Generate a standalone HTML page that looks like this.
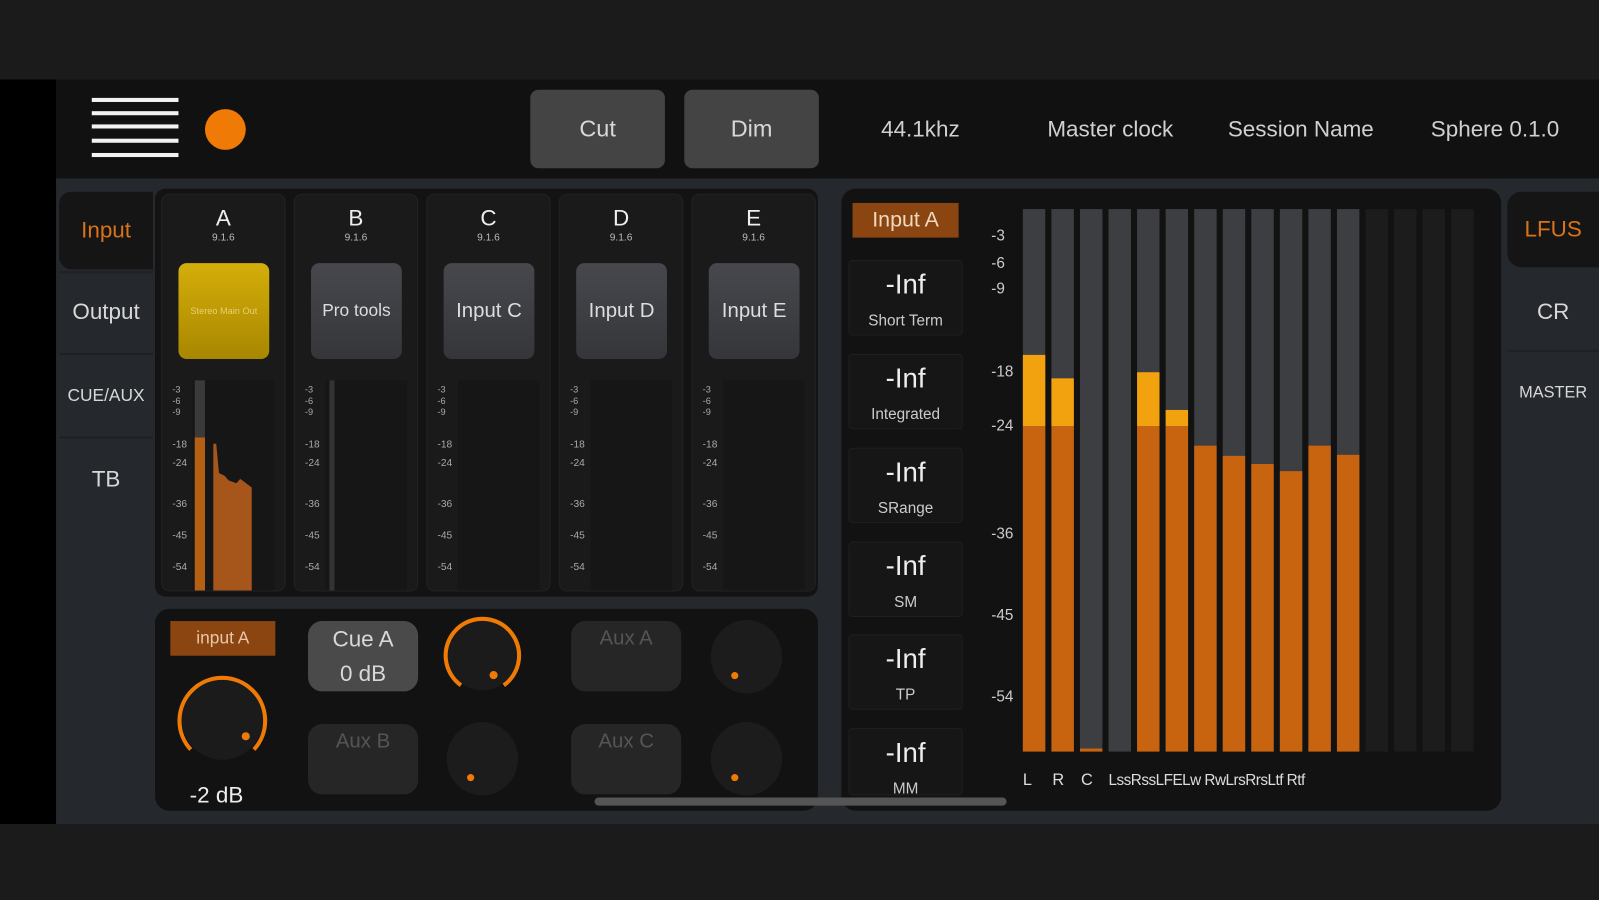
<!DOCTYPE html>
<html><head><meta charset="utf-8"><style>
*{margin:0;padding:0;box-sizing:border-box}
body{width:1599px;height:900px;background:#1b1b1b;position:relative;overflow:hidden;font-family:"Liberation Sans",sans-serif;color:#d8d8d8}
#w{position:absolute;left:0;top:0;width:1568px;height:883px;transform:scale(1.0198);transform-origin:0 0}
.a{position:absolute}
.c{display:flex;align-items:center;justify-content:center;text-align:center}
.ham{left:90px;width:85px;height:4px;background:#f2f2f2}
.tab{left:58px;width:92px;font-size:22px}
.rtab{left:1478px;width:90px;font-size:22px}
.ch{width:122px;top:190px;height:390px;background:#1a1a1a;border-radius:8px;border:1px solid #222}
.ltr{font-size:22px;width:100%;top:10px;text-align:center;color:#eee}
.ver{font-size:10px;width:100%;top:37px;text-align:center;color:#bbb}
.btn{left:16px;top:67px;width:89px;height:94px;border-radius:8px;background:linear-gradient(#47484d,#35363a);font-size:20px;color:#ddd}
.sc{font-size:10px;color:#aaa;left:10px}
.mtr{left:30px;top:182px;width:80px;height:206px;background:#161616}
.stat{left:832px;width:112px;height:74px;background:#161616;border-radius:4px;border:1px solid #1f1f1f}
.stat b{position:absolute;top:8px;width:100%;text-align:center;font-size:27px;font-weight:normal;color:#eee}
.stat i{position:absolute;top:50px;width:100%;text-align:center;font-size:15px;font-style:normal;color:#ccc}
.bar{top:205px;width:22px;height:532px;background:#3d3e42}
.dbar{top:205px;width:22px;height:532px;background:#1c1c1c}
.or{position:absolute;left:0;bottom:0;width:100%;background:#c8630f}
.ye{position:absolute;left:0;width:100%;background:#f2a20f}
.ms{left:972px;font-size:15px;color:#ccc}
.cl{top:757px;font-size:16px;color:#ddd}
.hdr{top:114px;font-size:22px;color:#d0d0d0}
</style></head><body><div id="w">
<div class="a" style="left:0;top:78px;width:55px;height:730px;background:#000"></div>
<div class="a" style="left:55px;top:78px;width:1513px;height:730px;background:#25282c"></div>
<div class="a" style="left:55px;top:78px;width:1513px;height:97px;background:#111"></div>
<div class="a ham" style="top:96px"></div><div class="a ham" style="top:109px"></div><div class="a ham" style="top:122px"></div><div class="a ham" style="top:136px"></div><div class="a ham" style="top:150px"></div>
<div class="a" style="left:201px;top:107px;width:40px;height:40px;border-radius:50%;background:#f07a06"></div>
<div class="a c" style="left:520px;top:88px;width:132px;height:77px;background:#444;border-radius:8px;font-size:23px">Cut</div>
<div class="a c" style="left:671px;top:88px;width:132px;height:77px;background:#444;border-radius:8px;font-size:23px">Dim</div>
<div class="a hdr" style="left:864px">44.1khz</div>
<div class="a hdr" style="left:1027px">Master clock</div>
<div class="a hdr" style="left:1204px">Session Name</div>
<div class="a hdr" style="left:1403px">Sphere 0.1.0</div>

<div class="a c tab" style="top:188px;height:76px;background:#151515;border-radius:12px 0 0 12px;color:#d9731a">Input</div>
<div class="a c tab" style="top:268px;height:76px">Output</div>
<div class="a c tab" style="top:348px;height:80px;font-size:17px">CUE/AUX</div>
<div class="a c tab" style="top:430px;height:80px">TB</div>
<div class="a" style="left:58px;top:266px;width:92px;height:2px;background:#1e2124"></div>
<div class="a" style="left:58px;top:346px;width:92px;height:2px;background:#1e2124"></div>
<div class="a" style="left:58px;top:428px;width:92px;height:2px;background:#1e2124"></div>

<div class="a" style="left:152px;top:185px;width:650px;height:400px;background:#131313;border-radius:10px"></div>

<div class="a ch" style="left:158px"><div class="a ltr">A</div><div class="a ver">9.1.6</div>
<div class="a c btn" style="background:linear-gradient(#d4ae0a,#a88700);font-size:9px;color:#e8d070">Stereo Main Out</div>
<div class="a mtr"><div class="a" style="left:2px;top:0;width:10px;height:206px;background:#3a3a3a"></div><div class="a" style="left:2px;top:56px;width:10px;height:150px;background:#b55f13"></div><div class="a" style="left:20px;top:62px;width:38px;height:144px;background:#a6561a;clip-path:polygon(0 0,8% 0,15% 20%,30% 22%,40% 25%,60% 27%,70% 24%,100% 30%,100% 100%,0 100%)"></div></div>
<div class="a sc" style="top:240px">-18</div><div class="a sc" style="top:258px">-24</div><div class="a sc" style="top:298px">-36</div><div class="a sc" style="top:329px">-45</div><div class="a sc" style="top:360px">-54</div>
<div class="a sc" style="top:186px;font-size:9px;line-height:11px">-3<br>-6<br>-9</div></div>

<div class="a ch" style="left:288px"><div class="a ltr">B</div><div class="a ver">9.1.6</div><div class="a c btn" style="font-size:17px">Pro tools</div>
<div class="a mtr"><div class="a" style="left:4px;top:0;width:5px;height:206px;background:#333"></div></div>
<div class="a sc" style="top:240px">-18</div><div class="a sc" style="top:258px">-24</div><div class="a sc" style="top:298px">-36</div><div class="a sc" style="top:329px">-45</div><div class="a sc" style="top:360px">-54</div><div class="a sc" style="top:186px;font-size:9px;line-height:11px">-3<br>-6<br>-9</div></div>

<div class="a ch" style="left:418px"><div class="a ltr">C</div><div class="a ver">9.1.6</div><div class="a c btn">Input C</div><div class="a mtr"></div>
<div class="a sc" style="top:240px">-18</div><div class="a sc" style="top:258px">-24</div><div class="a sc" style="top:298px">-36</div><div class="a sc" style="top:329px">-45</div><div class="a sc" style="top:360px">-54</div><div class="a sc" style="top:186px;font-size:9px;line-height:11px">-3<br>-6<br>-9</div></div>

<div class="a ch" style="left:548px"><div class="a ltr">D</div><div class="a ver">9.1.6</div><div class="a c btn">Input D</div><div class="a mtr"></div>
<div class="a sc" style="top:240px">-18</div><div class="a sc" style="top:258px">-24</div><div class="a sc" style="top:298px">-36</div><div class="a sc" style="top:329px">-45</div><div class="a sc" style="top:360px">-54</div><div class="a sc" style="top:186px;font-size:9px;line-height:11px">-3<br>-6<br>-9</div></div>

<div class="a ch" style="left:678px"><div class="a ltr">E</div><div class="a ver">9.1.6</div><div class="a c btn">Input E</div><div class="a mtr"></div>
<div class="a sc" style="top:240px">-18</div><div class="a sc" style="top:258px">-24</div><div class="a sc" style="top:298px">-36</div><div class="a sc" style="top:329px">-45</div><div class="a sc" style="top:360px">-54</div><div class="a sc" style="top:186px;font-size:9px;line-height:11px">-3<br>-6<br>-9</div></div>

<div class="a" style="left:152px;top:597px;width:650px;height:198px;background:#121212;border-radius:14px"></div>
<div class="a c" style="left:167px;top:609px;width:103px;height:34px;background:#8a4510;font-size:17px;color:#e8c8a8">input A</div>
<svg class="a" style="left:160px;top:650px" width="116" height="110"><circle cx="58" cy="55" r="40" fill="#1b1b1b"/><path d="M27 85 A42 42 0 1 1 89 85" fill="none" stroke="#f07a06" stroke-width="4"/><circle cx="81" cy="72" r="4" fill="#f07a06"/></svg>
<div class="a" style="left:186px;top:767px;font-size:22px;color:#eee">-2 dB</div>
<div class="a c" style="left:302px;top:609px;width:108px;height:69px;background:#4a4a4a;border-radius:14px;font-size:22px;line-height:34px">Cue A<br>0 dB</div>
<svg class="a" style="left:433px;top:603px" width="80" height="80"><circle cx="40" cy="40" r="34" fill="#1b1b1b"/><path d="M19 69 A36 36 0 1 1 61 69" fill="none" stroke="#f07a06" stroke-width="4"/><circle cx="51" cy="59" r="4" fill="#f07a06"/></svg>
<div class="a c" style="left:560px;top:609px;width:108px;height:69px;background:#262626;border-radius:14px;font-size:20px;color:#555;align-items:flex-start;padding-top:6px">Aux A</div>
<div class="a" style="left:697px;top:608px;width:70px;height:72px;border-radius:50%;background:#1c1c1c"></div><div class="a" style="left:717px;top:659px;width:7px;height:7px;border-radius:50%;background:#f07a06"></div>
<div class="a c" style="left:302px;top:710px;width:108px;height:69px;background:#262626;border-radius:14px;font-size:20px;color:#555;align-items:flex-start;padding-top:6px">Aux B</div>
<div class="a" style="left:438px;top:708px;width:70px;height:72px;border-radius:50%;background:#1c1c1c"></div><div class="a" style="left:458px;top:759px;width:7px;height:7px;border-radius:50%;background:#f07a06"></div>
<div class="a c" style="left:560px;top:710px;width:108px;height:69px;background:#262626;border-radius:14px;font-size:20px;color:#555;align-items:flex-start;padding-top:6px">Aux C</div>
<div class="a" style="left:697px;top:708px;width:70px;height:72px;border-radius:50%;background:#1c1c1c"></div><div class="a" style="left:717px;top:759px;width:7px;height:7px;border-radius:50%;background:#f07a06"></div>

<div class="a" style="left:825px;top:185px;width:647px;height:610px;background:#121212;border-radius:14px"></div>
<div class="a c" style="left:836px;top:199px;width:104px;height:34px;background:#8a4510;font-size:21px;color:#f0d8c0">Input A</div>
<div class="a stat" style="top:255px"><b>-Inf</b><i>Short Term</i></div>
<div class="a stat" style="top:347px"><b>-Inf</b><i>Integrated</i></div>
<div class="a stat" style="top:439px"><b>-Inf</b><i>SRange</i></div>
<div class="a stat" style="top:531px"><b>-Inf</b><i>SM</i></div>
<div class="a stat" style="top:622px"><b>-Inf</b><i>TP</i></div>
<div class="a stat" style="top:714px;height:66px;overflow:hidden"><b>-Inf</b><i>MM</i></div>

<div class="a ms" style="top:223px">-3</div><div class="a ms" style="top:250px">-6</div><div class="a ms" style="top:275px">-9</div><div class="a ms" style="top:356px">-18</div><div class="a ms" style="top:409px">-24</div><div class="a ms" style="top:515px">-36</div><div class="a ms" style="top:595px">-45</div><div class="a ms" style="top:675px">-54</div>

<div class="a bar" style="left:1003px"><div class="ye" style="top:143px;height:70px"></div><div class="or" style="height:319px"></div></div>
<div class="a bar" style="left:1031px"><div class="ye" style="top:166px;height:47px"></div><div class="or" style="height:319px"></div></div>
<div class="a bar" style="left:1059px"><div class="or" style="height:3px"></div></div>
<div class="a bar" style="left:1087px"></div>
<div class="a bar" style="left:1115px"><div class="ye" style="top:160px;height:53px"></div><div class="or" style="height:319px"></div></div>
<div class="a bar" style="left:1143px"><div class="ye" style="top:197px;height:16px"></div><div class="or" style="height:319px"></div></div>
<div class="a bar" style="left:1171px"><div class="or" style="height:300px"></div></div>
<div class="a bar" style="left:1199px"><div class="or" style="height:290px"></div></div>
<div class="a bar" style="left:1227px"><div class="or" style="height:282px"></div></div>
<div class="a bar" style="left:1255px"><div class="or" style="height:275px"></div></div>
<div class="a bar" style="left:1283px"><div class="or" style="height:300px"></div></div>
<div class="a bar" style="left:1311px"><div class="or" style="height:291px"></div></div>
<div class="a dbar" style="left:1339px"></div><div class="a dbar" style="left:1367px"></div><div class="a dbar" style="left:1395px"></div><div class="a dbar" style="left:1423px"></div>
<div class="a cl" style="left:1003px">L</div><div class="a cl" style="left:1032px">R</div><div class="a cl" style="left:1060px">C</div>
<div class="a cl" style="left:1087px;font-size:15px;letter-spacing:-0.5px">LssRssLFELw RwLrsRrsLtf Rtf</div>

<div class="a" style="left:583px;top:782px;width:404px;height:8px;background:#555;border-radius:4px"></div>

<div class="a c rtab" style="top:188px;height:74px;background:#151515;border-radius:14px 0 0 14px;color:#d9731a">LFUS</div>
<div class="a c rtab" style="top:270px;height:72px">CR</div>
<div class="a c rtab" style="top:348px;height:76px;font-size:16px">MASTER</div>
<div class="a" style="left:1478px;top:343px;width:90px;height:2px;background:#1e2124"></div>
</div></body></html>
